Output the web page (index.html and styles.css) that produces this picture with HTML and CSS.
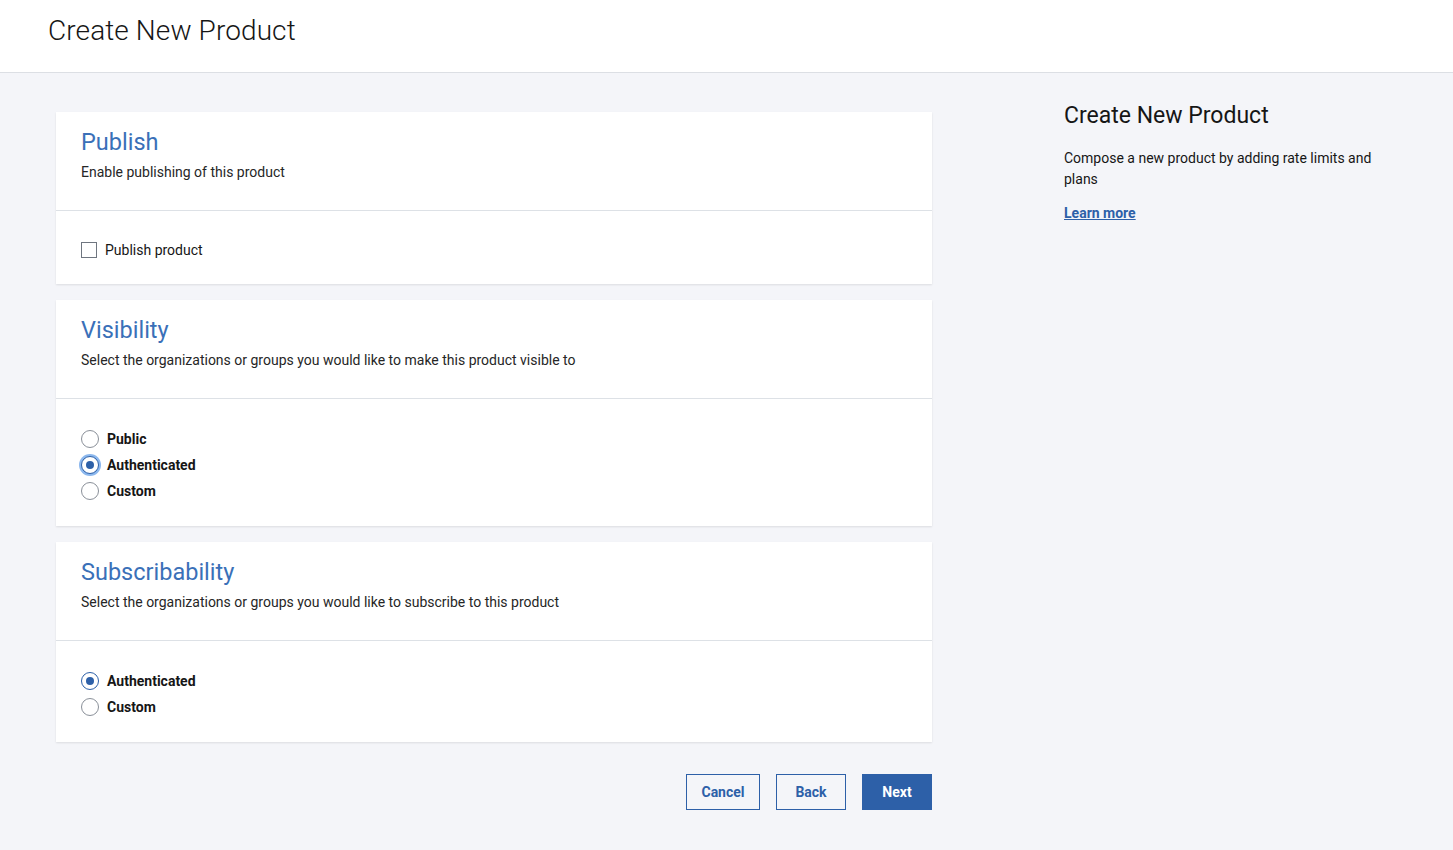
FILE: index.html
```html
<!DOCTYPE html>
<html lang="en">
<head>
<meta charset="utf-8">
<title>Create New Product</title>
<link rel="stylesheet" href="styles.css">
</head>
<body>
<header class="page-header">
  <h1 class="page-title">Create New Product</h1>
</header>
<div class="page-body">
  <main class="main-col">
    <section class="card">
      <div class="card-head">
        <h2 class="card-title">Publish</h2>
        <p class="card-desc">Enable publishing of this product</p>
      </div>
      <div class="card-body card-body-publish">
        <label class="check-row">
          <span class="checkbox"></span>
          <span class="check-label">Publish product</span>
        </label>
      </div>
    </section>

    <section class="card">
      <div class="card-head">
        <h2 class="card-title">Visibility</h2>
        <p class="card-desc">Select the organizations or groups you would like to make this product visible to</p>
      </div>
      <div class="card-body card-body-visibility">
        <div class="radio-list">
          <label class="radio-row"><span class="radio"></span><span class="radio-label">Public</span></label>
          <label class="radio-row"><span class="radio checked focused"></span><span class="radio-label">Authenticated</span></label>
          <label class="radio-row"><span class="radio"></span><span class="radio-label">Custom</span></label>
        </div>
      </div>
    </section>

    <section class="card">
      <div class="card-head">
        <h2 class="card-title">Subscribability</h2>
        <p class="card-desc">Select the organizations or groups you would like to subscribe to this product</p>
      </div>
      <div class="card-body card-body-subscribe">
        <div class="radio-list">
          <label class="radio-row"><span class="radio checked"></span><span class="radio-label">Authenticated</span></label>
          <label class="radio-row"><span class="radio"></span><span class="radio-label">Custom</span></label>
        </div>
      </div>
    </section>

    <div class="actions">
      <button class="btn btn-outline btn-cancel">Cancel</button>
      <button class="btn btn-outline btn-back">Back</button>
      <button class="btn btn-primary btn-next">Next</button>
    </div>
  </main>

  <aside class="side-col">
    <h2 class="side-title">Create New Product</h2>
    <p class="side-desc">Compose a new product by adding rate limits and plans</p>
    <a class="side-link" href="#">Learn more</a>
  </aside>
</div>
</body>
</html>
```

FILE: styles.css
```css
* { box-sizing: border-box; }

html, body {
  margin: 0;
  padding: 0;
}

body {
  font-family: Roboto, "Liberation Sans", Arial, sans-serif;
  color: #161616;
  background: #f4f5f9;
  min-height: 850px;
}

.page-header {
  height: 73px;
  background: #ffffff;
  border-bottom: 1px solid #dcdfe4;
  padding-left: 48px;
  display: flex;
  align-items: flex-start;
}

.page-title {
  margin: 13px 0 0;
  font-size: 28px;
  font-weight: 300;
  line-height: 36px;
  color: #161616;
  letter-spacing: 0.1px;
}

.page-body {
  display: flex;
  padding: 39px 0 0 56px;
}

.main-col {
  width: 876px;
  display: flex;
  flex-direction: column;
  gap: 16px;
}

.card {
  background: #ffffff;
  box-shadow: 0 1px 2px rgba(0, 0, 0, 0.1);
}

.card-head {
  height: 99px;
  padding: 16px 25px 0;
  border-bottom: 1px solid #dde1e6;
}

.card-title {
  margin: 0;
  font-size: 23.5px;
  font-weight: 400;
  line-height: 28px;
  color: #3a70b8;
}

.card-desc {
  margin: 7px 0 0;
  font-size: 14px;
  line-height: 18px;
  color: #262626;
}

.card-body {
  padding: 0 25px;
}

.card-body-publish {
  height: 73px;
  padding-top: 30px;
}

.card-body-visibility {
  height: 127px;
  padding-top: 31px;
}

.card-body-subscribe {
  height: 101px;
  padding-top: 31px;
}

.check-row {
  display: flex;
  align-items: center;
  gap: 8px;
}

.checkbox {
  width: 16px;
  height: 16px;
  border: 1px solid #6f7680;
  background: #fff;
  flex: none;
}

.check-label {
  font-size: 14px;
  line-height: 18px;
  color: #161616;
}

.radio-list {
  display: flex;
  flex-direction: column;
  gap: 8px;
}

.radio-row {
  display: flex;
  align-items: center;
  gap: 8px;
  height: 18px;
}

.radio {
  position: relative;
  width: 18px;
  height: 18px;
  border: 1px solid #8a9099;
  border-radius: 50%;
  background: #fff;
  flex: none;
}

.radio.checked {
  border-color: #2d60a8;
}

.radio.checked::after {
  content: "";
  position: absolute;
  left: 4px;
  top: 4px;
  width: 8px;
  height: 8px;
  border-radius: 50%;
  background: #2d60a8;
}

.radio.focused {
  box-shadow: 0 0 0 2px #8cb8ee;
}

.radio-label {
  font-size: 14px;
  font-weight: 700;
  line-height: 18px;
  color: #161616;
}

.actions {
  display: flex;
  justify-content: flex-end;
  gap: 16px;
  margin-top: 16px;
}

.btn {
  height: 36px;
  font-family: inherit;
  font-size: 14px;
  font-weight: 700;
  border-radius: 0;
  cursor: pointer;
  padding: 0;
}

.btn-outline {
  background: transparent;
  border: 1px solid #2d60a8;
  color: #2d60a8;
}

.btn-primary {
  background: #2d60a8;
  border: 1px solid #2d60a8;
  color: #ffffff;
}

.btn-cancel { width: 74px; }
.btn-back { width: 70px; }
.btn-next { width: 70px; }

.side-col {
  margin-left: 132px;
  width: 330px;
  padding-top: 0;
}

.side-title {
  margin: -10px 0 0;
  font-size: 23px;
  font-weight: 400;
  line-height: 28px;
  color: #161616;
}

.side-desc {
  margin: 18px 0 0;
  font-size: 14px;
  line-height: 21px;
  color: #161616;
}

.side-link {
  display: inline-block;
  margin-top: 14px;
  font-size: 14px;
  font-weight: 700;
  line-height: 18px;
  color: #2d60a8;
  text-decoration: underline;
}
```
